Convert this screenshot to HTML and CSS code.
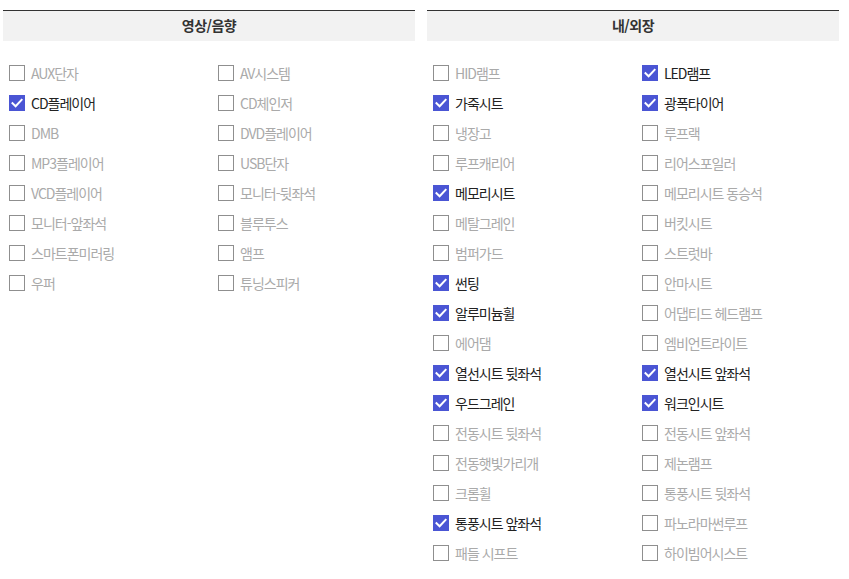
FILE: index.html
```html
<!DOCTYPE html>
<html lang="ko">
<head>
<meta charset="utf-8">
<link rel="stylesheet" href="styles.css">
</head>
<body>
<div class="wrap">
  <section class="panel">
    <h2 class="head">영상/음향</h2>
    <ul class="opts">
      <li class="opt"><span class="box"></span><span class="lbl">AUX단자</span></li>
      <li class="opt"><span class="box"></span><span class="lbl">AV시스템</span></li>
      <li class="opt on"><span class="box"><svg viewBox="0 0 16 16"><path d="M3.5 8.2 6.6 11.2 12.6 4.8"/></svg></span><span class="lbl">CD플레이어</span></li>
      <li class="opt"><span class="box"></span><span class="lbl">CD체인저</span></li>
      <li class="opt"><span class="box"></span><span class="lbl">DMB</span></li>
      <li class="opt"><span class="box"></span><span class="lbl">DVD플레이어</span></li>
      <li class="opt"><span class="box"></span><span class="lbl">MP3플레이어</span></li>
      <li class="opt"><span class="box"></span><span class="lbl">USB단자</span></li>
      <li class="opt"><span class="box"></span><span class="lbl">VCD플레이어</span></li>
      <li class="opt"><span class="box"></span><span class="lbl">모니터-뒷좌석</span></li>
      <li class="opt"><span class="box"></span><span class="lbl">모니터-앞좌석</span></li>
      <li class="opt"><span class="box"></span><span class="lbl">블루투스</span></li>
      <li class="opt"><span class="box"></span><span class="lbl">스마트폰미러링</span></li>
      <li class="opt"><span class="box"></span><span class="lbl">앰프</span></li>
      <li class="opt"><span class="box"></span><span class="lbl">우퍼</span></li>
      <li class="opt"><span class="box"></span><span class="lbl">튜닝스피커</span></li>
    </ul>
  </section>
  <section class="panel">
    <h2 class="head">내/외장</h2>
    <ul class="opts">
      <li class="opt"><span class="box"></span><span class="lbl">HID램프</span></li>
      <li class="opt on"><span class="box"><svg viewBox="0 0 16 16"><path d="M3.5 8.2 6.6 11.2 12.6 4.8"/></svg></span><span class="lbl">LED램프</span></li>
      <li class="opt on"><span class="box"><svg viewBox="0 0 16 16"><path d="M3.5 8.2 6.6 11.2 12.6 4.8"/></svg></span><span class="lbl">가죽시트</span></li>
      <li class="opt on"><span class="box"><svg viewBox="0 0 16 16"><path d="M3.5 8.2 6.6 11.2 12.6 4.8"/></svg></span><span class="lbl">광폭타이어</span></li>
      <li class="opt"><span class="box"></span><span class="lbl">냉장고</span></li>
      <li class="opt"><span class="box"></span><span class="lbl">루프랙</span></li>
      <li class="opt"><span class="box"></span><span class="lbl">루프캐리어</span></li>
      <li class="opt"><span class="box"></span><span class="lbl">리어스포일러</span></li>
      <li class="opt on"><span class="box"><svg viewBox="0 0 16 16"><path d="M3.5 8.2 6.6 11.2 12.6 4.8"/></svg></span><span class="lbl">메모리시트</span></li>
      <li class="opt"><span class="box"></span><span class="lbl">메모리시트 동승석</span></li>
      <li class="opt"><span class="box"></span><span class="lbl">메탈그레인</span></li>
      <li class="opt"><span class="box"></span><span class="lbl">버킷시트</span></li>
      <li class="opt"><span class="box"></span><span class="lbl">범퍼가드</span></li>
      <li class="opt"><span class="box"></span><span class="lbl">스트럿바</span></li>
      <li class="opt on"><span class="box"><svg viewBox="0 0 16 16"><path d="M3.5 8.2 6.6 11.2 12.6 4.8"/></svg></span><span class="lbl">썬팅</span></li>
      <li class="opt"><span class="box"></span><span class="lbl">안마시트</span></li>
      <li class="opt on"><span class="box"><svg viewBox="0 0 16 16"><path d="M3.5 8.2 6.6 11.2 12.6 4.8"/></svg></span><span class="lbl">알루미늄휠</span></li>
      <li class="opt"><span class="box"></span><span class="lbl">어댑티드 헤드램프</span></li>
      <li class="opt"><span class="box"></span><span class="lbl">에어댐</span></li>
      <li class="opt"><span class="box"></span><span class="lbl">엠비언트라이트</span></li>
      <li class="opt on"><span class="box"><svg viewBox="0 0 16 16"><path d="M3.5 8.2 6.6 11.2 12.6 4.8"/></svg></span><span class="lbl">열선시트 뒷좌석</span></li>
      <li class="opt on"><span class="box"><svg viewBox="0 0 16 16"><path d="M3.5 8.2 6.6 11.2 12.6 4.8"/></svg></span><span class="lbl">열선시트 앞좌석</span></li>
      <li class="opt on"><span class="box"><svg viewBox="0 0 16 16"><path d="M3.5 8.2 6.6 11.2 12.6 4.8"/></svg></span><span class="lbl">우드그레인</span></li>
      <li class="opt on"><span class="box"><svg viewBox="0 0 16 16"><path d="M3.5 8.2 6.6 11.2 12.6 4.8"/></svg></span><span class="lbl">워크인시트</span></li>
      <li class="opt"><span class="box"></span><span class="lbl">전동시트 뒷좌석</span></li>
      <li class="opt"><span class="box"></span><span class="lbl">전동시트 앞좌석</span></li>
      <li class="opt"><span class="box"></span><span class="lbl">전동햇빛가리개</span></li>
      <li class="opt"><span class="box"></span><span class="lbl">제논램프</span></li>
      <li class="opt"><span class="box"></span><span class="lbl">크롬휠</span></li>
      <li class="opt"><span class="box"></span><span class="lbl">통풍시트 뒷좌석</span></li>
      <li class="opt on"><span class="box"><svg viewBox="0 0 16 16"><path d="M3.5 8.2 6.6 11.2 12.6 4.8"/></svg></span><span class="lbl">통풍시트 앞좌석</span></li>
      <li class="opt"><span class="box"></span><span class="lbl">파노라마썬루프</span></li>
      <li class="opt"><span class="box"></span><span class="lbl">패들 시프트</span></li>
      <li class="opt"><span class="box"></span><span class="lbl">하이빔어시스트</span></li>
    </ul>
  </section>
</div>
</body>
</html>
```

FILE: styles.css
```css
html, body {
  margin: 0;
  padding: 0;
  background: #fff;
}
body {
  font-family: "Noto Sans CJK KR", "Noto Sans", sans-serif;
  color: #222;
}
.wrap {
  display: flex;
  gap: 12px;
  padding: 10px 10px 0 3px;
}
.panel {
  width: 412px;
  flex: none;
}
.head {
  margin: 0;
  border-top: 1px solid #333;
  background: #f2f2f2;
  height: 30px;
  line-height: 29px;
  text-align: center;
  font-size: 14px;
  font-weight: 700;
  color: #333;
  letter-spacing: -0.5px;
}
.opts {
  list-style: none;
  margin: 17px 0 0;
  padding: 0 0 0 6px;
  display: grid;
  grid-template-columns: 209px 1fr;
}
.opt {
  height: 30px;
  display: flex;
  align-items: center;
  gap: 6px;
}
.box {
  width: 16px;
  height: 16px;
  box-sizing: border-box;
  border: 1px solid #8f8f8f;
  background: #fff;
  flex: none;
  display: flex;
}
.box svg {
  width: 16px;
  height: 16px;
  margin: -1px;
}
.box path {
  fill: none;
  stroke: #fff;
  stroke-width: 2;
  stroke-linecap: square;
}
.on .box {
  background: #4a55d4;
  border-color: #4a55d4;
}
.lbl {
  font-size: 14px;
  letter-spacing: -1px;
  color: #aaa;
  line-height: 20px;
}
.on .lbl {
  color: #222;
}
```
